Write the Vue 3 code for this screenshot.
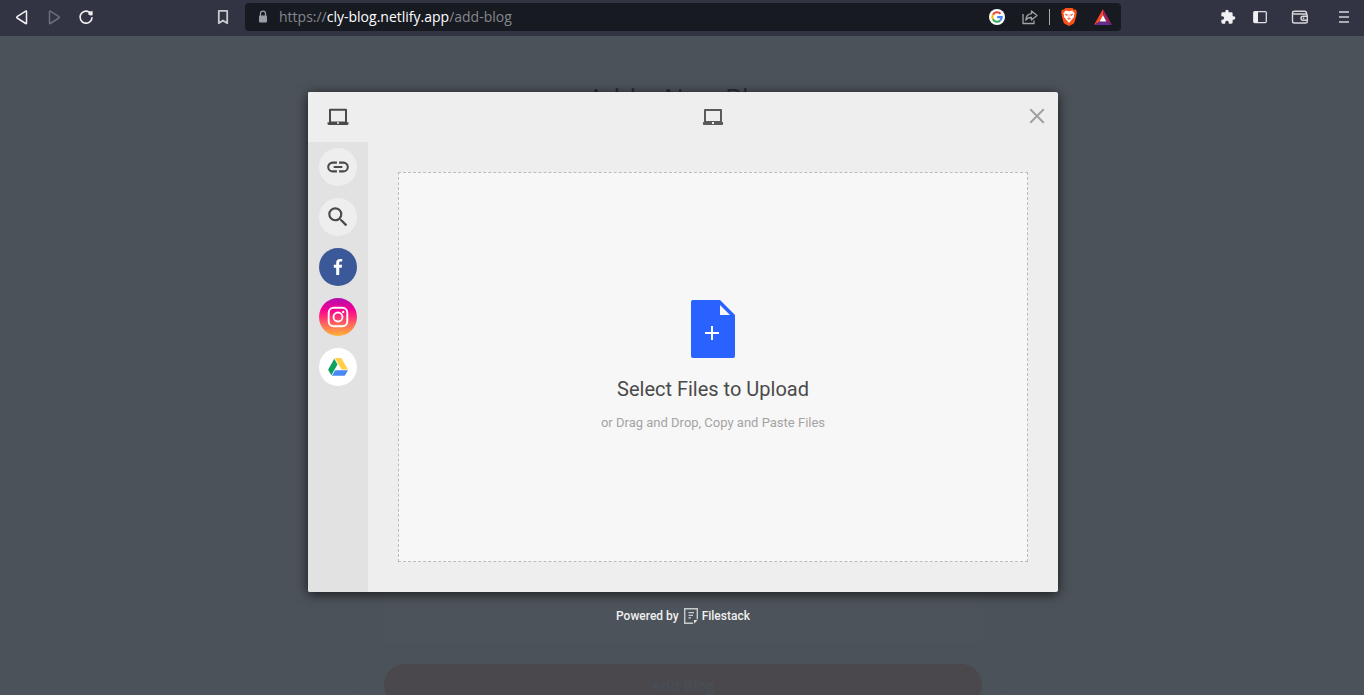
<script setup>
import { ref } from 'vue'

const blogBody = ref('')
</script>

<template>
  <div class="window">
    <header class="toolbar">
      <nav class="nav-buttons" aria-label="Navigation">
        <button class="tool" aria-label="Back">
          <svg width="16" height="16" viewBox="0 0 16 16" fill="none" stroke="#f0f0f2" stroke-width="1.5" stroke-linejoin="round"><path d="M12.500 2.400v11.800q0 .7-.8.3L3.100 9q-.8-.6 0-1.300L11.700 2.100q.8-.4.8.3Z" /></svg>
        </button>
        <button class="tool" aria-label="Forward" disabled>
          <svg width="16" height="16" viewBox="0 0 16 16" fill="none" stroke="#6c6e7a" stroke-width="1.5" stroke-linejoin="round"><path d="M3.500 2.400v11.800q0 .7.8.3L12.900 9q.8-.6 0-1.300L4.300 2.100q-.8-.4-.8.3Z" /></svg>
        </button>
        <button class="tool" aria-label="Reload">
          <svg width="16" height="16" viewBox="0 0 16 16" fill="none"><path d="M11 2.900A6 6 0 1 0 14 8.800" stroke="#f0f0f2" stroke-width="1.6" stroke-linecap="round" /><path d="M10.700 2.600q2 .4 3.600-.4v3.800q-2 .5-3.600-.6Z" fill="#f0f0f2" stroke="#f0f0f2" stroke-width=".6" stroke-linejoin="round" /></svg>
        </button>
      </nav>
      <button class="tool bookmark" aria-label="Bookmark this page">
        <svg width="16" height="16" viewBox="0 0 16 16" fill="none" stroke="#c9cad0" stroke-width="1.8" stroke-linejoin="round"><path d="M3.800 1.800h8.400v12.400L8 11.400l-4.200 2.800Z" /></svg>
      </button>
      <div class="address">
        <svg class="lock" width="10" height="14" viewBox="0 0 10 14"><path d="M2.500 6V3.600a2.500 2.500 0 0 1 5 0V6" fill="none" stroke="#9b9da5" stroke-width="1.300" /><rect x="1" y="5.500" width="8" height="7" rx="1" fill="#9b9da5" /></svg>
        <p class="url">https://<span class="host">cly-blog.netlify.app</span>/add-blog</p>
        <button class="tool google" aria-label="Google">
          <svg width="16" height="16" viewBox="0 0 16 16"><circle cx="8" cy="8" r="8" fill="#fff" /><g fill="none" stroke-width="2.100"><path d="M11.500 4.700A4.700 4.700 0 0 0 3.900 5.700" stroke="#ea4335" /><path d="M3.900 5.700a4.700 4.700 0 0 0 0 4.600" stroke="#fbbc05" /><path d="M3.900 10.300a4.700 4.700 0 0 0 7.300 1.200" stroke="#34a853" /><path d="M11.200 11.500A4.700 4.700 0 0 0 12.700 8.100H8.200" stroke="#4285f4" /></g></svg>
        </button>
        <button class="tool share" aria-label="Share">
          <svg width="18" height="16" viewBox="0 0 18 16" fill="none" stroke="#a2a4aa" stroke-width="1.300" stroke-linejoin="round"><path d="M2 5v9.500h11v-3M10.500 2l5.500 4.500-5.500 4.500V8.500C7.500 8.300 6 9.300 4.800 11.200 5 7.500 7 5 10.500 4.700Z" /></svg>
        </button>
        <span class="divider"></span>
        <button class="tool brave" aria-label="Brave Shields">
          <svg width="18" height="18" viewBox="0 0 18 18"><path d="M5.500 0h7l1.700 1.700 1.800-.2.900 3-.6 1.500.2 1.100-2 7.100q-.4 1.200-1.500 1.900L9 18l-4-1.900q-1.100-.7-1.500-1.900l-2-7.100.2-1.100-.6-1.500.9-3 1.800.2Z" fill="#fb5018" /><path d="M5.700 2.600 9 3.200l3.300-.6 2.500 3-.8 1.500.1 1.700-2.400 3L9 14.900l-2.700-3.100-2.400-3L4 7.100l-.8-1.500Z" fill="#fff" /><path d="m4.900 6 2.700.7-.8 1.100Zm8.200 0-2.700.7.800 1.100ZM9 6.500V10M7.200 10.300 9 11.500l1.800-1.200" fill="#fb5018" stroke="#fb5018" stroke-width=".5" /></svg>
        </button>
        <button class="tool rewards" aria-label="Brave Rewards">
          <svg width="18" height="16" viewBox="0 0 18 16"><path d="M9 0 0 16l5.700-3.400L9 6.500Z" fill="#ff4724" /><path d="m9 0 9 16-5.700-3.400L9 6.500Z" fill="#9e1f63" /><path d="M0 16h18l-5.700-3.400H5.700Z" fill="#662d91" /><path d="m9 6.200 3.400 6.400H5.600Z" fill="#fff" /></svg>
        </button>
      </div>
      <div class="extras">
        <button class="tool" aria-label="Extensions">
          <svg width="16" height="16" viewBox="0 0 24 24" fill="#f0f0f2"><path d="M20.500 11H19V7a2 2 0 0 0-2-2h-4V3.500a2.500 2.500 0 0 0-5 0V5H4a2 2 0 0 0-2 2v3.800h1.500a2.700 2.700 0 0 1 0 5.400H2V20a2 2 0 0 0 2 2h3.800v-1.500a2.700 2.700 0 0 1 5.400 0V22H17a2 2 0 0 0 2-2v-4h1.500a2.500 2.500 0 0 0 0-5Z" /></svg>
        </button>
        <button class="tool sidebar" aria-label="Sidebar">
          <svg width="16" height="16" viewBox="0 0 16 16"><rect x="1.700" y="2.600" width="12.600" height="11" rx="1" fill="none" stroke="#dedee2" stroke-width="1.300" /><path d="M2 2.500h4v11H2Z" fill="#f0f0f2" /></svg>
        </button>
        <button class="tool wallet" aria-label="Wallet">
          <svg width="18" height="16" viewBox="0 0 18 16" fill="none" stroke="#d8d8dc" stroke-width="1.400"><path d="M15.500 5V4q0-1.800-1.800-1.800H3.500q-2 0-2 1.700v8.300q0 1.800 2 1.800h11q1.800 0 1.800-1.500V6.700q0-1.700-1.800-1.700H3.200Q1.500 5 1.500 3.700M16 7.200h-4.200q-1.800 0-1.800 2t1.800 2H16M11.800 9.200h1.500" /></svg>
        </button>
        <button class="tool menu" aria-label="Menu">
          <svg width="12" height="14" viewBox="0 0 12 14" stroke="#d4d4d9" stroke-width="1.500"><path d="M1 2h10M1 7h10M1 12h10" /></svg>
        </button>
      </div>
    </header>

    <main class="page">
      <form class="blog-form" @submit.prevent>
        <h1 class="form-title">Add a New Blog</h1>
        <textarea v-model="blogBody" class="blog-body" aria-label="Blog content"></textarea>
        <button class="submit" type="submit">Add Blog</button>
      </form>

      <div class="overlay">
        <section class="picker" role="dialog" aria-label="File picker">
          <nav class="sources" aria-label="File sources">
            <button class="source current" aria-label="My Device">
              <svg width="22" height="20" viewBox="0 0 22 20"><path d="M3 2.800h16v12.700H3Z" fill="none" stroke="#4a4a4a" stroke-width="2" stroke-linejoin="round" /><path d="M.5 15.300h21v1.200q0 1.600-1.600 1.600H2.100Q.5 18.100.5 16.500Z" fill="#4a4a4a" /><circle cx="11" cy="15.900" r="1" fill="#eee" /></svg>
            </button>
            <button class="source" aria-label="Link">
              <span class="disc"><svg width="26" height="24" viewBox="0 0 24 24" preserveAspectRatio="xMidYMid slice" fill="#4a4a4a"><path d="M3.900 12c0-1.710 1.390-3.100 3.100-3.100h4V7H7a5 5 0 0 0 0 10h4v-1.900H7A3.100 3.100 0 0 1 3.900 12ZM8 13h8v-2H8v2Zm9-6h-4v1.900h4a3.100 3.100 0 0 1 0 6.200h-4V17h4a5 5 0 0 0 0-10Z" /></svg></span>
            </button>
            <button class="source" aria-label="Web Search">
              <span class="disc"><svg width="26" height="26" viewBox="0 0 24 24" fill="#4a4a4a"><path d="M15.500 14h-.79l-.28-.27A6.470 6.470 0 0 0 16 9.500 6.500 6.500 0 1 0 9.500 16c1.610 0 3.090-.59 4.230-1.570l.27.28v.79l5 4.990L20.490 19l-4.990-5zm-6 0A4.500 4.500 0 1 1 14 9.500 4.500 4.500 0 0 1 9.500 14z" /></svg></span>
            </button>
            <button class="source" aria-label="Facebook">
              <span class="disc facebook"><svg width="10" height="18" viewBox="0 0 10 18" fill="#fff"><path d="M6.200 17V9.700h2.500l.4-2.900H6.200V5c0-.8.300-1.400 1.500-1.400h1.500V1.100Q8.500 1 7.100 1C4.700 1 3.200 2.300 3.200 4.600v2.200H.8v2.900h2.400V17Z" /></svg></span>
            </button>
            <button class="source" aria-label="Instagram">
              <span class="disc instagram"><svg width="22" height="22" viewBox="0 0 22 22" fill="none" stroke="#fff" stroke-width="1.900"><rect x="1.700" y="1.700" width="18.600" height="18.600" rx="5" /><circle cx="11" cy="11" r="4.500" /><circle cx="16.200" cy="5.900" r="1.200" fill="#fff" stroke="none" /></svg></span>
            </button>
            <button class="source" aria-label="Google Drive">
              <span class="disc drive"><svg width="20" height="18" viewBox="0 0 20 18"><path d="M6.800 0h6.500L20 11.500h-6.500Z" fill="#ffcf48" /><path d="M6.300.8 9.500 6.500 3.300 17.300.1 11.700Z" fill="#11a15f" /><path d="M7.200 12.200H20l-3.300 5.600H3.900Z" fill="#4688f4" /></svg></span>
            </button>
          </nav>
          <div class="content">
            <header class="content-head">
              <svg class="device" width="20" height="18" viewBox="0 0 20 18"><path d="M2 2h16v12H2Z" fill="none" stroke="#5a5a5a" stroke-width="2" stroke-linejoin="round" /><path d="M0 14h20v2.300q0 .7-.7.700H.7q-.7 0-.7-.7Z" fill="#5a5a5a" /><path d="M9 14h2v2H9Z" fill="#eee" /></svg>
              <button class="close" aria-label="Close">
                <svg width="16" height="16" viewBox="0 0 16 16" stroke="#a0a0a0" stroke-width="2"><path d="m1.300 1.300 13.400 13.400M14.700 1.300 1.300 14.700" /></svg>
              </button>
            </header>
            <button class="dropzone">
              <svg width="44" height="58" viewBox="0 0 44 58"><path d="M2 0h27l15 15v41q0 2-2 2H2q-2 0-2-2V2q0-2 2-2Z" fill="#2962ff" /><path d="M29 5v10h10Z" fill="#f7f7f7" /><path d="M21 26v14M14 33h14" stroke="#fff" stroke-width="2" /></svg>
              <span class="drop-title">Select Files to Upload</span>
              <span class="drop-hint">or Drag and Drop, Copy and Paste Files</span>
            </button>
          </div>
        </section>
        <p class="powered">
          Powered by
          <a class="brand" href="#">
            <svg width="14" height="16" viewBox="0 0 14 16" fill="none" stroke="#c8cbcd"><path d="M9 15.300H.7V.7h12.600v10.500" stroke-width="1.400" /><path d="M4.500 4.700h5.500M4.500 7.300h4.500M4.500 9.900h2.500" stroke-width="1.200" /><path d="M10 12h3.500L10 15.700Z" fill="#dfe1e2" stroke="none" /></svg>
            Filestack
          </a>
        </p>
      </div>
    </main>
  </div>
</template>

<style scoped>
.window {
  display: flex;
  flex-direction: column;
  height: 100vh;
  font-family: Roboto, "Liberation Sans", sans-serif;
}
button {
  font: inherit;
  margin: 0;
  padding: 0;
  border: 0;
  background: none;
}
svg {
  display: block;
  flex: none;
}
.toolbar {
  display: flex;
  align-items: center;
  height: 36px;
  flex: none;
  box-sizing: border-box;
  padding: 0 14px 2px;
  background: #323443;
}
.tool {
  display: flex;
  align-items: center;
  justify-content: center;
  flex: none;
}
.nav-buttons {
  display: flex;
  gap: 16px;
}
.bookmark {
  margin-left: 121px;
}
.address {
  display: flex;
  align-items: center;
  flex: 1;
  min-width: 0;
  height: 28px;
  box-sizing: border-box;
  margin: 0 99px 0 14px;
  padding: 0 9px 0 13px;
  border-radius: 4px;
  background: #171a21;
}
.url {
  flex: 1;
  margin: 0 0 0 11px;
  font: 14px/18px "Open Sans", "Noto Sans", sans-serif;
  color: #85878d;
  white-space: nowrap;
}
.host {
  color: #fff;
}
.share {
  margin-left: 16px;
}
.divider {
  width: 1px;
  height: 16px;
  margin: 0 10px;
  background: #a8a9ae;
}
.rewards {
  margin-left: 16px;
}
.extras {
  display: flex;
  align-items: center;
}
.sidebar {
  margin-left: 16px;
}
.wallet {
  margin-left: 23px;
}
.menu {
  margin-left: 29px;
}
.page {
  position: relative;
  flex: 1;
  min-height: 0;
  overflow: hidden;
  padding-left: 2px;
  background: #4b5259;
}
.blog-form {
  display: flex;
  flex-direction: column;
  width: 650px;
  max-width: 100%;
  box-sizing: border-box;
  margin: 4px auto 0;
  padding: 38px 25px 26px;
  border: 1px dashed #495157;
  font-family: "Open Sans", "Noto Sans", sans-serif;
}
.form-title {
  margin: 0;
  font-size: 26px;
  line-height: 36px;
  font-weight: 400;
  text-align: center;
  color: #272c36;
}
.blog-body {
  height: 505px;
  box-sizing: border-box;
  margin: 24px 0 20px;
  border: 0;
  resize: none;
  background: #4c535a;
}
.submit {
  height: 42px;
  border-radius: 21px;
  background: #4a484c;
  color: #46505b;
  font-size: 15px;
}
.overlay {
  position: absolute;
  inset: 0;
  display: flex;
  flex-direction: column;
  align-items: center;
  padding: 56px 16px 0 18px;
  color: #f0f0f0;
}
.picker {
  display: flex;
  width: 750px;
  max-width: 100%;
  height: 500px;
  flex: none;
  border-radius: 2px;
  overflow: hidden;
  background: #eee;
  box-shadow: 0 2px 12px rgba(0, 0, 0, 0.7);
}
.sources {
  width: 60px;
  flex: none;
  background: #e2e2e2;
}
.source {
  display: flex;
  align-items: center;
  justify-content: center;
  width: 100%;
  height: 50px;
}
.current {
  background: #eee;
}
.disc {
  display: flex;
  align-items: center;
  justify-content: center;
  width: 38px;
  height: 38px;
  border-radius: 50%;
  background: #eee;
}
.facebook {
  background: #3b5998;
}
.instagram {
  background: linear-gradient(#b010b0, #f50092 30%, #ff2f78 50%, #ff6b5b 70%, #ffb238);
}
.drive {
  background: #fff;
}
.content {
  display: flex;
  flex-direction: column;
  flex: 1;
  min-width: 0;
}
.content-head {
  display: flex;
  align-items: center;
  justify-content: center;
  position: relative;
  height: 50px;
}
.close {
  position: absolute;
  right: 13px;
  top: 16px;
}
.dropzone {
  display: flex;
  flex-direction: column;
  align-items: center;
  justify-content: center;
  flex: 1;
  margin: 30px;
  padding-bottom: 2px;
  border: 1px dashed #bbb;
  background: #f7f7f7;
}
.drop-title {
  margin-top: 18px;
  font-size: 20px;
  line-height: 26px;
  color: #4a4a4a;
}
.drop-hint {
  margin-top: 12px;
  font-size: 13px;
  line-height: 18px;
  color: #a4a4a4;
}
.powered {
  display: flex;
  align-items: center;
  gap: 5px;
  margin: 15px 0 0;
  font-size: 12px;
  line-height: 18px;
  font-weight: 500;
}
.brand {
  display: flex;
  align-items: center;
  gap: 4px;
  color: inherit;
  text-decoration: none;
}
</style>

<style>
body {
  margin: 0;
}
</style>
